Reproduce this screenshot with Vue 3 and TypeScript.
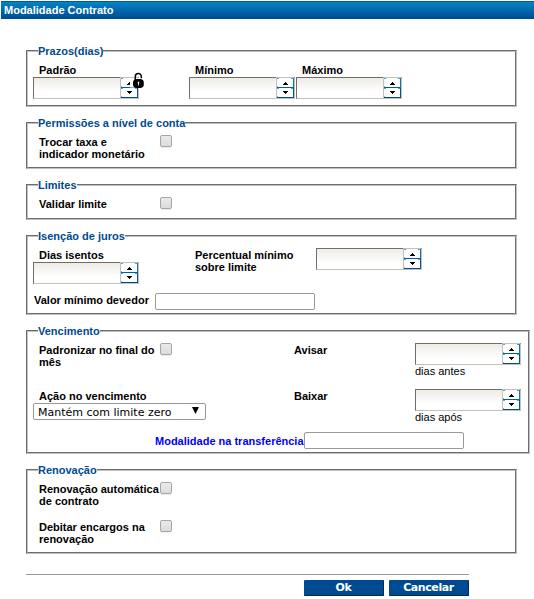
<script setup lang="ts">
import { h, reactive, type FunctionalComponent } from 'vue'

const form = reactive({
  padrao: '',
  minimo: '',
  maximo: '',
  trocarTaxa: false,
  validarLimite: false,
  diasIsentos: '',
  percentualMinimo: '',
  valorMinimo: '',
  padronizar: false,
  avisar: '',
  acao: 'Mantém com limite zero',
  baixar: '',
  modalidade: '',
  renovacaoAutomatica: false,
  debitarEncargos: false,
})

const arrow = (points: string) =>
  h('svg', { width: 5, height: 3, viewBox: '0 0 5 3', 'shape-rendering': 'crispEdges' }, [
    h('path', { d: points, fill: '#000' }),
  ])

// Numeric field with stacked up/down steppers
const Spinner: FunctionalComponent<
  { modelValue: string },
  { 'update:modelValue': (value: string) => void }
> = (props, { emit }) => {
  const step = (delta: number) =>
    emit('update:modelValue', String((Number(props.modelValue) || 0) + delta))
  return h('div', { class: 'spinner' }, [
    h('input', {
      class: 'spinner-input',
      value: props.modelValue,
      onInput: (e: Event) => emit('update:modelValue', (e.target as HTMLInputElement).value),
    }),
    h('div', { class: 'spinner-buttons' }, [
      h('button', { type: 'button', class: 'step', onClick: () => step(1) }, [
        arrow('M2 0h1v1h1v1h1v1H0V2h1V1h1z'),
      ]),
      h('button', { type: 'button', class: 'step', onClick: () => step(-1) }, [
        arrow('M0 0h5v1H4v1H3v1H2V2H1V1H0z'),
      ]),
    ]),
  ])
}
Spinner.props = ['modelValue']
Spinner.emits = ['update:modelValue']
</script>

<template>
  <main class="page">
    <header class="title">Modalidade Contrato</header>
    <form class="form" @submit.prevent>
      <fieldset class="group prazos">
        <legend>Prazos(dias)</legend>
        <div class="columns">
          <div class="field with-lock">
            <label class="indent">Padrão</label>
            <Spinner v-model="form.padrao" />
            <svg class="lock" width="14" height="18" viewBox="0 0 14 18">
              <path d="M0 6h14v9.5H0z" fill="#fff" />
              <path d="M5.3 8V4.4a3 3 0 0 1 6 0V6.2" fill="none" stroke="#000" stroke-width="1.5" />
              <rect x="3" y="7" width="10.8" height="9" rx="3.8" />
              <path d="M7.8 9.8h1.4v1.6h-.3V13.5h-.8v-2.1h-.3z" fill="#fff" />
            </svg>
          </div>
          <div class="field">
            <label class="indent">Mínimo</label>
            <Spinner v-model="form.minimo" />
          </div>
          <div class="field">
            <label class="indent">Máximo</label>
            <Spinner v-model="form.maximo" />
          </div>
        </div>
      </fieldset>

      <fieldset class="group permissoes">
        <legend>Permissões a nível de conta</legend>
        <div class="check-row">
          <label class="indent">Trocar taxa e<br />indicador monetário</label>
          <input v-model="form.trocarTaxa" class="check" type="checkbox" />
        </div>
      </fieldset>

      <fieldset class="group limites">
        <legend>Limites</legend>
        <div class="check-row">
          <label class="indent">Validar limite</label>
          <input v-model="form.validarLimite" class="check" type="checkbox" />
        </div>
      </fieldset>

      <fieldset class="group isencao">
        <legend>Isenção de juros</legend>
        <div class="isencao-row">
          <div class="field">
            <label class="indent">Dias isentos</label>
            <Spinner v-model="form.diasIsentos" />
          </div>
          <label class="percent-label">Percentual mínimo<br />sobre limite</label>
          <Spinner v-model="form.percentualMinimo" class="raised" />
        </div>
        <div class="valor-row">
          <label>Valor mínimo devedor</label>
          <input v-model="form.valorMinimo" class="text-input" type="text" />
        </div>
      </fieldset>

      <fieldset class="group vencimento">
        <legend>Vencimento</legend>
        <div class="venc-row">
          <div class="check-row">
            <label class="indent">Padronizar no final do<br />mês</label>
            <input v-model="form.padronizar" class="check" type="checkbox" />
          </div>
          <label>Avisar</label>
          <div class="field raised">
            <Spinner v-model="form.avisar" />
            <span class="hint">dias antes</span>
          </div>
        </div>
        <div class="venc-row">
          <div class="field">
            <label class="indent">Ação no vencimento</label>
            <div class="select">
              <span>{{ form.acao }}</span>
              <svg width="7" height="7" viewBox="0 0 7 7"><path d="M0 0h7L3.5 7z" /></svg>
            </div>
          </div>
          <label>Baixar</label>
          <div class="field raised">
            <Spinner v-model="form.baixar" />
            <span class="hint">dias após</span>
          </div>
        </div>
        <div class="transfer-row">
          <label class="link">Modalidade na transferência</label>
          <input v-model="form.modalidade" class="text-input" type="text" />
        </div>
      </fieldset>

      <fieldset class="group renovacao">
        <legend>Renovação</legend>
        <div class="check-row">
          <label class="indent">Renovação automática<br />de contrato</label>
          <input v-model="form.renovacaoAutomatica" class="check" type="checkbox" />
        </div>
        <div class="check-row">
          <label class="indent">Debitar encargos na<br />renovação</label>
          <input v-model="form.debitarEncargos" class="check" type="checkbox" />
        </div>
      </fieldset>

      <footer class="actions">
        <button class="action" type="submit">Ok</button>
        <button class="action" type="button">Cancelar</button>
      </footer>
    </form>
  </main>
</template>

<style>
body {
  background: #fff;
  overflow: hidden;
}
</style>

<style scoped>
.page {
  box-sizing: border-box;
  width: 534px;
  height: 599px;
  padding: 1px 0 0 1px;
  font: bold 11px/12px 'Liberation Sans', Arial, sans-serif;
  color: #000;
}
.title {
  height: 18px;
  padding-left: 3px;
  box-sizing: border-box;
  color: #fff;
  background: linear-gradient(#0483c7, #004a91);
  border-top: 1px solid #00599c;
  line-height: 17px;
}
.form {
  display: flex;
  flex-direction: column;
  align-items: flex-start;
  gap: 10px;
  padding: 26px 0 0 25px;
}
.group {
  box-sizing: border-box;
  width: 491px;
  min-width: 0;
  margin: 0;
  padding: 0 0 0 5px;
  border: 2px groove #c0c0c0;
}
.group legend {
  height: 12px;
  margin-left: 5px;
  padding: 0;
  color: #004a91;
}
label {
  display: block;
  white-space: nowrap;
}
.indent {
  padding-left: 6px;
}
.prazos { height: 62px; }
.permissoes { height: 52px; }
.limites { height: 41px; }
.isencao { height: 85px; }
.vencimento { width: 504px; height: 129px; }
.renovacao { height: 90px; }
.columns {
  display: grid;
  grid-template-columns: 156px 107px 106px;
  padding-top: 7px;
}
.field {
  display: flex;
  flex-direction: column;
  align-items: flex-start;
}
.prazos .field,
.isencao .field {
  gap: 1px;
}
.with-lock {
  position: relative;
}
.lock {
  position: absolute;
  left: 97px;
  top: 8px;
}
.check-row {
  display: grid;
  grid-template-columns: 127px 12px;
  align-items: start;
}
.permissoes .check-row,
.limites .check-row,
.renovacao .check-row {
  padding-top: 7px;
}
.renovacao .check-row + .check-row {
  padding-top: 14px;
}
.check {
  appearance: none;
  box-sizing: border-box;
  width: 12px;
  height: 12px;
  margin: -1px 0 0;
  border: 1px solid #a6a6a6;
  border-radius: 2px;
  background: linear-gradient(#eaeaea, #dcdcdc);
  box-shadow: 0 1px 0 #eee;
}
.check:checked {
  background: #555;
}
.isencao-row {
  display: grid;
  grid-template-columns: 162px 121px 106px;
  align-items: start;
  padding-top: 7px;
}
.raised {
  margin-top: -1px;
}
.valor-row {
  display: grid;
  grid-template-columns: 121px 160px;
  align-items: start;
  padding: 9px 0 0 1px;
}
.valor-row label {
  padding-top: 1px;
}
.text-input {
  box-sizing: border-box;
  width: 160px;
  height: 17px;
  margin: 0;
  padding: 0 3px;
  border: 1px solid #999;
  border-radius: 2px;
  background: #fff;
  font: 11px 'DejaVu Sans', sans-serif;
}
.venc-row {
  display: grid;
  grid-template-columns: 261px 121px 106px;
  align-items: start;
  height: 46px;
}
.vencimento legend + .venc-row {
  margin-top: 7px;
}
.hint {
  font-weight: normal;
}
.select {
  display: flex;
  align-items: center;
  justify-content: space-between;
  box-sizing: border-box;
  width: 173px;
  height: 17px;
  margin-top: 1px;
  padding: 0 6px 0 4px;
  border: 1px solid #999;
  border-radius: 2px;
  font: 11px/15px 'DejaVu Sans', Verdana, sans-serif;
}
.select span {
  position: relative;
  top: 1px;
}
.select svg {
  margin-top: -2px;
}
.transfer-row {
  display: grid;
  grid-template-columns: 149px 160px;
  padding: 0 0 0 122px;
  margin-top: -4px;
}
.link {
  color: #00f;
  padding-top: 3px;
}
.actions {
  display: flex;
  justify-content: flex-end;
  gap: 5px;
  box-sizing: border-box;
  width: 443px;
  margin-top: 10px;
  padding-top: 5px;
  border-top: 1px solid #999;
}
.action {
  width: 80px;
  height: 16px;
  padding: 1px 0 0;
  border: 0;
  border-right: 1px solid #002a55;
  border-bottom: 1px solid #002a55;
  border-radius: 1px;
  background: #004a91;
  color: #fff;
  font: bold 11px/14px 'DejaVu Sans', Verdana, sans-serif;
  letter-spacing: -0.4px;
}
.form :deep(.spinner) {
  display: flex;
  box-sizing: border-box;
  width: 106px;
  height: 22px;
  border: 1px solid;
  border-color: #716f64 #c5c1b8 #c5c1b8 #716f64;
  background: linear-gradient(#efece7, #fff 70%);
}
.form :deep(.spinner-input) {
  flex: 1;
  min-width: 0;
  padding: 0 2px;
  border: 0;
  background: transparent;
  font: 11px 'DejaVu Sans', sans-serif;
}
.form :deep(.spinner-buttons) {
  display: grid;
  grid-template-rows: 10px 10px;
  width: 18px;
  box-sizing: border-box;
  margin-top: -1px;
  border-top: 1px solid #c5c1b8;
  border-left: 1px solid #c5c1b8;
}
.form :deep(.step) {
  display: flex;
  align-items: center;
  justify-content: center;
  box-sizing: border-box;
  padding: 2px 0 0 1px;
  border: 0;
  border-right: 1px solid #0878b9;
  border-bottom: 1px solid #0060a6;
  background:
    linear-gradient(#45a9dc, #45a9dc) left top / 2px 1px no-repeat,
    linear-gradient(#45a9dc, #45a9dc) right top / 2px 1px no-repeat,
    linear-gradient(#8abfe0, #8abfe0) left bottom / 1px 1px no-repeat,
    #fff;
}
.form :deep(.step:last-child) {
  border-right-color: #00559b;
  border-bottom-color: #004a91;
  padding-top: 0;
}
</style>
